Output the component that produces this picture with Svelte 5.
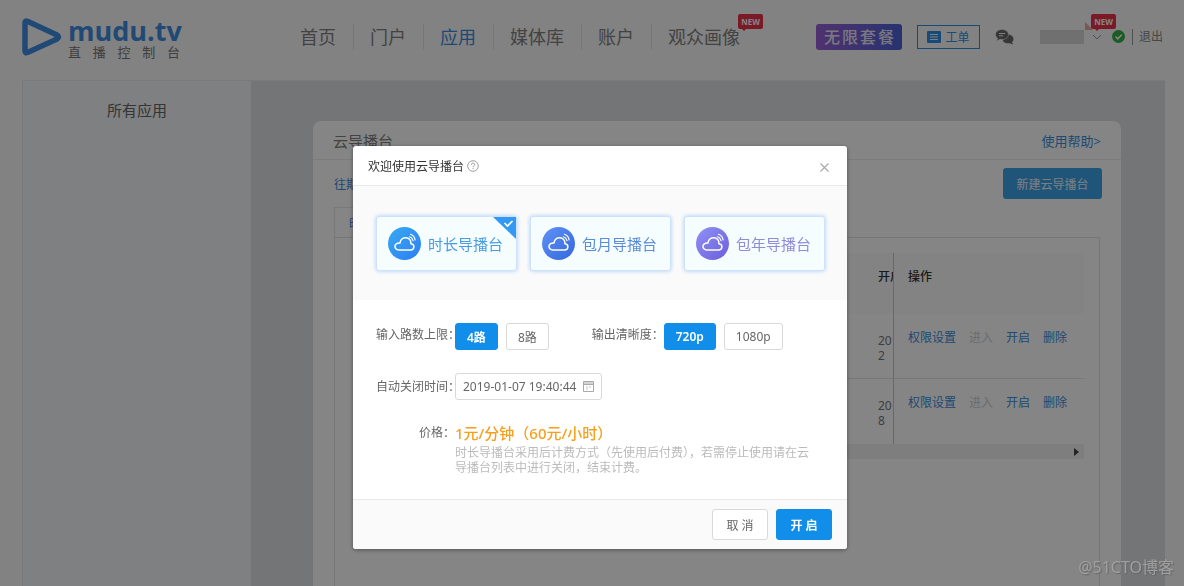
<script>
	const navItems = ['首页', '门户', '应用', '媒体库', '账户', '观众画像'];

	const plans = [
		{ id: 'hour', name: '时长导播台' },
		{ id: 'month', name: '包月导播台' },
		{ id: 'year', name: '包年导播台' }
	];

	const rows = [
		{ start: '201', rest: '2' },
		{ start: '201', rest: '8' }
	];

	let open = $state(true);
	let plan = $state('hour');
	let inputs = $state('4路');
	let quality = $state('720p');
	let closeAt = $state('2019-01-07 19:40:44');
</script>

<div class="page">
	<header class="topbar">
		<a class="logo" href="#home">
			<svg width="40" height="38" viewBox="0 0 40 38">
				<path d="M3 4.500Q3 2.500 5.500 3.300L35 17Q38 19 35 21L5.500 34.500Q3 35.500 3 33Z" fill="none" stroke="#3f8ee0" stroke-width="5.500" stroke-linejoin="round" />
			</svg>
			<span class="logo-text">
				<strong>mudu.tv</strong>
				<small>直播控制台</small>
			</span>
		</a>

		<nav class="nav">
			{#each navItems as item}
				<a href="#{item}" class:active={item === '应用'}>
					{item}
					{#if item === '观众画像'}<span class="new">NEW</span>{/if}
				</a>
			{/each}
		</nav>

		<div class="account">
			<button class="package">无限套餐</button>
			<button class="ticket">
				<svg width="14" height="12" viewBox="0 0 14 12">
					<rect width="14" height="12" rx="1" fill="#2d8fe8" />
					<path d="M3 3.500h8M3 6h8M3 8.500h8" stroke="#f6f6f6" />
				</svg>
				工单
			</button>
			<svg class="chat" width="19" height="16" viewBox="0 0 19 16">
				<path d="M9 5.500c5-1 9.500 1 9.500 4.500 0 1.300-.6 2.300-1.500 3l1 2.500-3.500-1.300c-3 .5-5.500-.7-6.500-2.200z" fill="#6a6a6a" />
				<path d="M7 .5c3.600 0 6.500 2.200 6.500 5s-2.900 5-6.500 5c-.7 0-1.300 0-2-.2L1.700 12l.8-2.900C1.200 8.200.5 7 .5 5.500c0-2.800 2.900-5 6.500-5z" fill="#6a6a6a" stroke="#f6f6f6" stroke-width=".6" />
				<path d="M4 4.500h6M4 6.800h4" stroke="#f6f6f6" />
			</svg>
			<span class="user">
				<span class="mask"></span>
				<svg width="10" height="6" viewBox="0 0 10 6"><path d="M1 1l4 4 4-4" fill="none" stroke="#8c96b4" /></svg>
				<i class="spark"></i>
				<span class="new">NEW</span>
			</span>
			<svg class="verified" width="13" height="13" viewBox="0 0 13 13">
				<circle cx="6.500" cy="6.500" r="6.500" fill="#33b045" />
				<path d="M3.500 6.500l2.300 2.300 3.900-4" fill="none" stroke="#fff" stroke-width="1.600" />
			</svg>
			<a class="logout" href="#logout">退出</a>
		</div>
	</header>

	<div class="shell">
		<aside class="sidebar">所有应用</aside>
		<main class="content">
			<section class="card">
				<div class="card-head">
					<h1>云导播台</h1>
					<a href="#help">使用帮助&gt;</a>
				</div>
				<div class="card-body">
					<div class="toolbar">
						<a href="#past">往期</a>
						<button class="create">新建云导播台</button>
					</div>
					<div class="tabs"><button>时长导播台</button></div>
					<div class="panel">
						<table>
							<colgroup>
								<col />
								<col class="col-time" />
								<col class="col-actions" />
							</colgroup>
							<thead>
								<tr>
									<th></th>
									<th class="time">开启</th>
									<th class="actions">操作</th>
								</tr>
							</thead>
							<tbody>
								{#each rows as row}
									<tr>
										<td></td>
										<td class="time">{row.start}<br />{row.rest}</td>
										<td class="actions">
											<div>
												<a href="#auth">权限设置</a>
												<span>进入</span>
												<a href="#start">开启</a>
												<a href="#delete">删除</a>
											</div>
										</td>
									</tr>
								{/each}
							</tbody>
						</table>
						<div class="scrollbar">
							<svg width="5" height="8" viewBox="0 0 5 8"><path d="M0 0l5 4-5 4z" fill="#444" /></svg>
						</div>
					</div>
				</div>
			</section>
		</main>
	</div>
</div>

{#if open}
	<div class="overlay">
		<div class="modal" role="dialog" aria-labelledby="modal-title">
			<div class="modal-head">
				<h2 id="modal-title">欢迎使用云导播台</h2>
				<svg width="12" height="12" viewBox="0 0 12 12" fill="none" stroke="#888">
					<circle cx="6" cy="6" r="5.300" stroke-width=".8" />
					<path d="M4.300 4.800c0-2.300 3.400-2.200 3.400-.2C7.700 5.800 6 5.800 6 7.200M6 8.200v1" stroke-width=".9" />
				</svg>
				<button class="close" aria-label="关闭" onclick={() => (open = false)}>
					<svg width="9" height="9" viewBox="0 0 9 9"><path d="M.5.5l8 8M8.500.5l-8 8" stroke="#aaa" stroke-width="1.200" /></svg>
				</button>
			</div>

			<div class="plans">
				{#each plans as p}
					<button class="plan {p.id}" aria-pressed={plan === p.id} onclick={() => (plan = p.id)}>
						<span class="plan-icon">
							<svg width="33" height="33" viewBox="0 0 33 33" fill="none" stroke="#fff" stroke-width="1.500" stroke-linecap="round" stroke-linejoin="round">
								<path d="M11 23h11.500c4.300 0 4.600-5.800.4-6.200C23.300 9 12.800 8.600 12 16c-6.500-.5-6.500 7-1 7" />
								<path d="M21.500 9.800c1.800.6 3 1.900 3.500 3.800M22.500 7.300c2.500.9 4.200 2.900 4.600 5.500" stroke-width="1.200" />
							</svg>
						</span>
						{p.name}
						{#if plan === p.id}
							<svg class="corner" width="23" height="22" viewBox="0 0 23 22">
								<path d="M0 0h23v22z" fill="#3399f3" />
								<path d="M11.500 6l3 3 5-5" fill="none" stroke="#fff" stroke-width="1.600" />
							</svg>
						{/if}
					</button>
				{/each}
			</div>

			<div class="form">
				<div class="row">
					<span class="label">输入路数上限：</span>
					<div class="choices">
						{#each ['4路', '8路'] as v}
							<button aria-pressed={inputs === v} onclick={() => (inputs = v)}>{v}</button>
						{/each}
					</div>
					<span class="label second">输出清晰度：</span>
					<div class="choices">
						{#each ['720p', '1080p'] as v}
							<button aria-pressed={quality === v} onclick={() => (quality = v)}>{v}</button>
						{/each}
					</div>
				</div>
				<div class="row">
					<label class="label" for="close-at">自动关闭时间：</label>
					<div class="date">
						<input id="close-at" type="text" bind:value={closeAt} />
						<svg width="11" height="11" viewBox="0 0 11 11" fill="none" stroke="#aaa">
							<path d="M.5.500h10v10H.5zM.5 3.500h10M.5 2h10" />
							<path d="M3 6h2M6 6h2M3 8h2" stroke-width=".7" />
						</svg>
					</div>
				</div>
				<div class="row">
					<span class="label">价格：</span>
					<div class="price">
						<strong>1元/分钟（60元/小时）</strong>
						<p>时长导播台采用后计费方式（先使用后付费），若需停止使用请在云<br />导播台列表中进行关闭，结束计费。</p>
					</div>
				</div>
			</div>

			<div class="modal-foot">
				<button onclick={() => (open = false)}>取 消</button>
				<button class="primary">开 启</button>
			</div>
		</div>
	</div>
{/if}

<div class="watermark">@51CTO博客</div>

<style>
	:global(body) {
		background: #f9f9f9;
		color: #666;
		font-family: 'Noto Sans', 'Noto Sans CJK SC', sans-serif;
		font-size: 12px;
		overflow: hidden;
	}

	button,
	input {
		box-sizing: border-box;
		margin: 0;
		font: inherit;
		color: inherit;
		cursor: pointer;
	}

	a {
		color: #3d8ddc;
		text-decoration: none;
	}

	.page {
		display: flex;
		flex-direction: column;
		height: 100vh;
		padding: 0 19px 0 22px;
		box-sizing: border-box;
	}

	.topbar {
		display: flex;
		align-items: center;
		height: 73px;
		padding: 0 2px 7px 0;
	}

	.logo {
		display: flex;
		align-items: center;
		gap: 6px;
		width: 261px;
		color: #3f8ee0;
	}

	.logo-text {
		display: flex;
		flex-direction: column;
		width: 112px;
		padding-top: 4px;
	}

	.logo-text strong {
		font-family: 'Open Sans', sans-serif;
		font-size: 27px;
		line-height: 26px;
	}

	.logo-text small {
		font-size: 13px;
		line-height: 16px;
		color: #777;
		text-align-last: justify;
	}

	.nav {
		display: flex;
	}

	.nav a {
		position: relative;
		padding: 0 17px 0 16px;
		border-left: 1px solid #e2e2e2;
		font-size: 18px;
		line-height: 26px;
		color: #808080;
		white-space: nowrap;
	}

	.nav a:first-child {
		border-color: transparent;
	}

	.nav a.active {
		color: #3d8ddc;
	}

	.new {
		position: absolute;
		top: -10px;
		right: -6px;
		padding: 0 3px;
		border-radius: 2px;
		background: #e8334a;
		color: #fff;
		font-size: 8px;
		font-weight: 700;
		line-height: 15px;
	}

	.new::after {
		content: '';
		position: absolute;
		top: 100%;
		left: 4px;
		border: 2px solid transparent;
		border-top-color: #e8334a;
	}

	.account {
		display: flex;
		align-items: center;
		margin-left: auto;
	}

	.package {
		width: 86px;
		height: 26px;
		padding: 0 8px;
		border: 0;
		border-radius: 3px;
		background: linear-gradient(90deg, #9b5fd6, #4a62d8);
		color: #e8e8f4;
		font-size: 16px;
		font-weight: 500;
		line-height: 24px;
		text-align-last: justify;
	}

	.ticket {
		display: flex;
		align-items: center;
		justify-content: center;
		gap: 4px;
		width: 63px;
		height: 24px;
		margin: 0 15px;
		padding: 0;
		border: 1px solid #2d8fe8;
		background: none;
		color: #2d8fe8;
	}

	.user {
		position: relative;
		display: flex;
		align-items: center;
		gap: 8px;
		margin: 0 10px 0 26px;
	}

	.user .new {
		top: -16px;
		right: -14px;
	}

	.mask {
		width: 44px;
		height: 14px;
		background: #d6d6d6;
	}

	.spark {
		position: absolute;
		top: -8px;
		right: 9px;
		border: 4px solid transparent;
		border-left-color: #e8a8a8;
		border-bottom-color: #e8a8a8;
	}

	.logout {
		margin-left: 7px;
		padding-left: 6px;
		border-left: 1px solid #999;
		line-height: 16px;
		color: #888;
	}

	.shell {
		display: flex;
		flex: 1;
		min-height: 0;
		border: 1px solid #e9eaec;
		border-width: 1px 0 0 1px;
		box-sizing: border-box;
	}

	.sidebar {
		width: 228px;
		padding-top: 17px;
		background: #f3f5f8;
		font-size: 15px;
		line-height: 24px;
		text-align: center;
	}

	.content {
		display: flex;
		flex: 1;
		padding: 40px 44px 0 62px;
		background: #dfe1e5;
	}

	.card {
		display: flex;
		flex: 1;
		flex-direction: column;
		border-radius: 8px 8px 0 0;
		background: #fff;
	}

	.card-head {
		display: flex;
		align-items: center;
		justify-content: space-between;
		height: 38px;
		padding: 0 20px;
		border-bottom: 1px solid #ececec;
		font-size: 13px;
	}

	.card-head h1 {
		margin: 0;
		font-size: 15px;
		font-weight: 400;
		color: #808080;
	}

	.card-body {
		display: flex;
		flex: 1;
		flex-direction: column;
		padding: 8px 19px 0 21px;
	}

	.toolbar {
		display: flex;
		align-items: center;
		justify-content: space-between;
	}

	.create {
		width: 99px;
		height: 31px;
		padding: 0;
		border: 0;
		border-radius: 3px;
		background: #3fa4ea;
		color: #eef4fa;
	}

	.tabs {
		display: flex;
		margin-top: 8px;
	}

	.tabs button {
		height: 30px;
		padding: 0 14px;
		border: 1px solid #e6e6e6;
		border-bottom: 0;
		background: none;
		color: #3d8ddc;
	}

	.panel {
		flex: 1;
		padding: 15px 15px 0 19px;
		border: 1px solid #e2e2e2;
		border-bottom: 0;
		margin-right: 2px;
	}

	table {
		width: 100%;
		border-collapse: separate;
		border-spacing: 0;
		table-layout: fixed;
		line-height: 15px;
	}

	.col-time {
		width: 31px;
	}

	.col-actions {
		width: 191px;
	}

	th {
		height: 61px;
		box-sizing: border-box;
		padding: 0 0 14px;
		background: #fbfbfb;
		color: #333;
		font-weight: 500;
		text-align: left;
		vertical-align: middle;
	}

	td {
		height: 65px;
		box-sizing: border-box;
		padding: 0;
		border-bottom: 1px solid #e6e6e6;
		vertical-align: top;
	}

	tbody tr:last-child td {
		border-bottom: 0;
	}

	.time {
		overflow: hidden;
		padding-left: 16px;
		white-space: nowrap;
	}

	td.time {
		padding-top: 19px;
		color: #777;
	}

	.actions {
		padding-left: 14px;
		border-left: 1px solid #c8c8c8;
	}

	td.actions {
		padding-top: 16px;
	}

	td.actions div {
		display: flex;
		gap: 13px;
	}

	td.actions span {
		color: #d0d0d0;
	}

	.scrollbar {
		display: flex;
		align-items: center;
		justify-content: flex-end;
		height: 15px;
		padding-right: 5px;
		background: #f1f1f1;
	}

	.overlay {
		position: fixed;
		inset: 0;
		display: flex;
		align-items: flex-start;
		justify-content: center;
		padding: 146px 0 0 16px;
		background: rgba(0, 0, 0, 0.48);
	}

	.modal {
		width: 494px;
		border-radius: 3px;
		background: #fff;
		box-shadow: 0 1px 4px rgba(0, 0, 0, 0.4);
		overflow: hidden;
	}

	.modal-head {
		display: flex;
		align-items: center;
		gap: 3px;
		height: 39px;
		padding: 0 15px;
		border-bottom: 1px solid #e9e9e9;
	}

	.modal-head h2 {
		margin: 0;
		font-size: 12px;
		font-weight: 400;
		color: #333;
	}

	.close {
		display: flex;
		margin-left: auto;
		padding: 4px 3px 0;
		border: 0;
		background: none;
	}

	.plans {
		display: grid;
		grid-template-columns: repeat(3, 1fr);
		gap: 13px;
		padding: 30px 22px 29px 23px;
		background: #fafafa;
	}

	.plan {
		position: relative;
		display: flex;
		align-items: center;
		gap: 7px;
		height: 55px;
		padding: 0 0 0 11px;
		border: 1px solid #cfe2fb;
		border-radius: 3px;
		background: #f6fdff;
		box-shadow: 0 0 4px #a9cdfa;
		font-size: 15px;
		white-space: nowrap;
	}

	.plan-icon {
		display: flex;
		border-radius: 50%;
	}

	.hour {
		color: #4a9be6;
	}

	.month {
		color: #5a8cda;
	}

	.year {
		color: #918bd8;
	}

	.hour .plan-icon {
		background: linear-gradient(135deg, #37aaf0, #2f7df6);
	}

	.month .plan-icon {
		background: linear-gradient(135deg, #5f92f6, #3467dc);
	}

	.year .plan-icon {
		background: linear-gradient(135deg, #8f92f5, #6c5cdd);
	}

	.corner {
		position: absolute;
		top: 0;
		right: 0;
	}

	.form {
		display: flex;
		flex-direction: column;
		gap: 23px;
		padding: 23px 23px 24px;
	}

	.row {
		display: flex;
	}

	.label {
		width: 79px;
		line-height: 24px;
		white-space: nowrap;
		text-align: right;
	}

	.row:nth-child(2) .label {
		line-height: 27px;
	}

	.row:last-child .label {
		line-height: 20px;
	}

	.second {
		margin-left: 36px;
	}

	.choices {
		display: flex;
		gap: 8px;
	}

	.choices button,
	.modal-foot button {
		border: 1px solid #d9d9d9;
		border-radius: 3px;
		background: #fff;
	}

	.choices button {
		height: 27px;
		padding: 0 11px;
	}

	.choices button[aria-pressed='true'],
	.modal-foot .primary {
		border-color: #108ee9;
		background: #108ee9;
		color: #fff;
		font-weight: 600;
	}

	.date {
		display: flex;
		align-items: center;
		width: 147px;
		height: 27px;
		padding: 0 7px;
		border: 1px solid #d9d9d9;
		border-radius: 3px;
		box-sizing: border-box;
	}

	.date input {
		flex: 1;
		min-width: 0;
		padding: 0;
		border: 0;
		outline: 0;
		background: none;
	}

	.price strong {
		display: block;
		font-size: 15px;
		font-weight: 500;
		line-height: 20px;
		color: #f5a01e;
	}

	.price p {
		margin: 2px 0 0;
		font-size: 12px;
		line-height: 15px;
		color: #bbb;
		white-space: nowrap;
	}

	.modal-foot {
		display: flex;
		justify-content: flex-end;
		gap: 8px;
		padding: 9px 15px;
		border-top: 1px solid #e9e9e9;
		background: #fafafa;
	}

	.modal-foot button {
		width: 56px;
		height: 31px;
		padding: 0;
	}

	.watermark {
		position: fixed;
		right: 10px;
		bottom: 8px;
		font-size: 16px;
		line-height: 22px;
		color: #a0a0a0;
		text-shadow: 1px 1px 1px #666;
	}
</style>
